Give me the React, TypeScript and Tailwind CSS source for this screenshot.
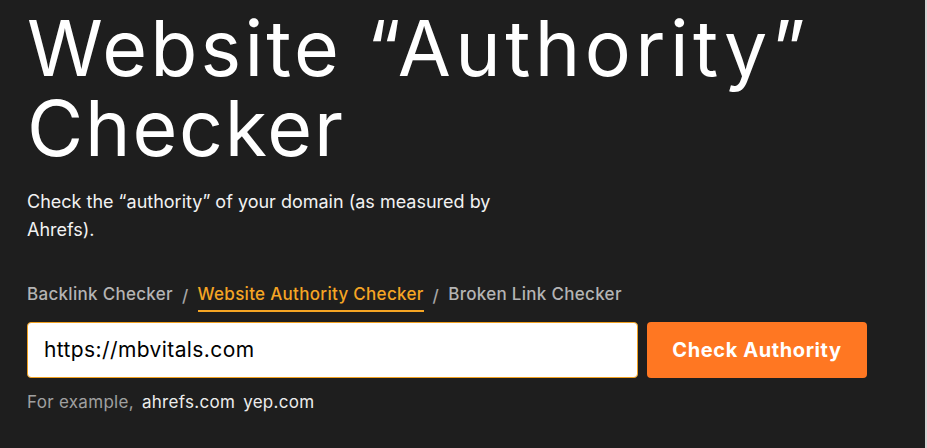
const crumbs = [
  { label: "Backlink Checker", active: false },
  { label: "Website Authority Checker", active: true },
  { label: "Broken Link Checker", active: false },
];

const examples = ["ahrefs.com", "yep.com"];

const App: React.FC = () => {
  return (
    <div className="h-[448px] w-[927px] overflow-hidden border-r-2 border-[#d4d4d4] bg-[#1e1e1e] font-['Inter',sans-serif] text-white">
      <div className="pl-[27px] pt-[8px]">
        <h1 className="whitespace-nowrap text-[77px] font-normal leading-[80px] tracking-[3.2px]">
          Website <span className="tracking-[4.4px]">“Authority”</span>
          <br />
          <span className="tracking-[1.8px]">Checker</span>
        </h1>

        <p className="mt-[20px] max-w-[500px] text-[18px] leading-[28px] text-[#f2f2f2]">
          Check the “authority” of your domain (as measured by Ahrefs).
        </p>

        <nav className="mt-[38px] flex items-center gap-[9px] text-[17px] font-medium tracking-[0.3px]">
          {crumbs.map((c, i) => (
            <div key={c.label} className="flex items-center gap-[9px]">
              {i > 0 && <span className="text-[#a6a6a6]">/</span>}
              <a
                href="#"
                className={
                  c.active
                    ? "border-b-2 border-[#f5a524] pb-[2px] text-[#f5a524]"
                    : "pb-[4px] text-[#b4b4b4]"
                }
              >
                {c.label}
              </a>
            </div>
          ))}
        </nav>

        <form className="mt-[10px] flex gap-[9px]">
          <input
            type="text"
            defaultValue="https://mbvitals.com"
            className="h-[56px] w-[611px] rounded-[4px] border-[1.5px] border-[#f0a020] bg-white px-[16px] text-[21px] tracking-[0.4px] text-black outline-none"
          />
          <button
            type="button"
            className="h-[56px] w-[220px] rounded-[4px] bg-[#ff7722] text-[20px] font-bold tracking-[0.6px] text-white"
          >
            Check Authority
          </button>
        </form>

        <div className="mt-[12px] flex gap-[8px] text-[17px] tracking-[0.3px]">
          <span className="text-[#a0a0a0]">For example,</span>
          {examples.map((e) => (
            <span key={e} className="text-[#ececec]">
              {e}
            </span>
          ))}
        </div>
      </div>
    </div>
  );
};

export default App;
